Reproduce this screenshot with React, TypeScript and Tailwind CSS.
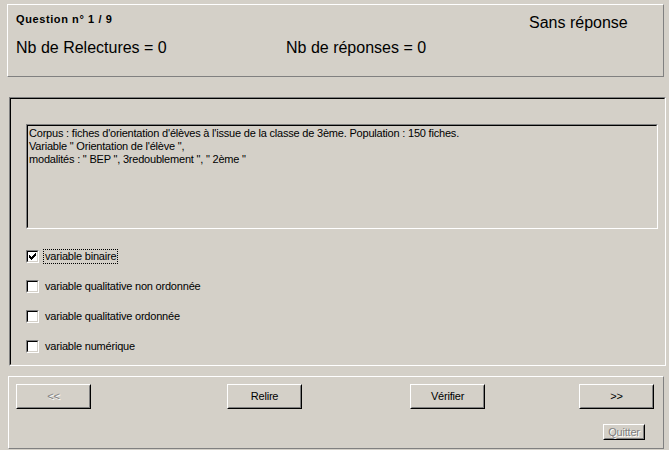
import React from "react";

const font = { fontFamily: '"Liberation Sans", Arial, sans-serif' };

const options = [
  { label: "variable binaire", checked: true },
  { label: "variable qualitative non ordonnée", checked: false },
  { label: "variable qualitative ordonnée", checked: false },
  { label: "variable numérique", checked: false },
];

const checkPixels = [
  [6, 0],
  [5, 1], [6, 1],
  [0, 2], [4, 2], [5, 2], [6, 2],
  [0, 3], [1, 3], [3, 3], [4, 3], [5, 3],
  [0, 4], [1, 4], [2, 4], [3, 4], [4, 4],
  [1, 5], [2, 5], [3, 5],
  [2, 6],
];

function CheckBox({ checked }: { checked: boolean }) {
  return (
    <div className="h-[13px] w-[13px] shrink-0 border border-t-[#808080] border-l-[#808080] border-b-white border-r-white">
      <div className="flex h-full w-full items-center justify-center border border-t-black border-l-black border-b-[#d4d0c8] border-r-[#d4d0c8] bg-white">
        {checked && (
          <svg width="7" height="7" viewBox="0 0 7 7" shapeRendering="crispEdges">
            {checkPixels.map(([x, y]) => (
              <rect key={`${x}-${y}`} x={x} y={y} width="1" height="1" fill="#000" />
            ))}
          </svg>
        )}
      </div>
    </div>
  );
}

function Button({
  label,
  disabled,
  className,
}: {
  label: string;
  disabled?: boolean;
  className: string;
}) {
  return (
    <div
      className={`shrink-0 border border-t-white border-l-white border-b-black border-r-black ${className}`}
    >
      <div className="flex h-full w-full items-center justify-center border border-t-[#d4d0c8] border-l-[#d4d0c8] border-b-[#808080] border-r-[#808080] text-[11px] leading-[13px] tracking-[-0.2px]">
        <span
          className={
            disabled ? "text-[#808080] [text-shadow:1px_1px_0_#ffffff]" : "text-black"
          }
        >
          {label}
        </span>
      </div>
    </div>
  );
}

export default function App() {
  return (
    <div className="h-[450px] w-[669px] overflow-hidden bg-[#d4d0c8] text-black" style={font}>
      {/* en-tête */}
      <div className="ml-[7px] mt-[4px] h-[73px] w-[657px] border border-t-white border-l-white border-b-[#808080] border-r-[#808080] pl-[8px] pt-[8px]">
        <div className="grid grid-cols-[270px_243px_1fr] items-start">
          <div className="text-[11px] font-bold leading-[13px] tracking-[0.6px]">Question n° 1 / 9</div>
          <div />
          <div className="text-[16px] leading-[20px]">Sans réponse</div>
        </div>
        <div className="mt-[5px] grid grid-cols-[270px_243px_1fr] text-[16px] leading-[20px]">
          <div>Nb de Relectures = 0</div>
          <div>Nb de réponses = 0</div>
          <div />
        </div>
      </div>

      {/* question */}
      <div className="ml-[9px] mt-[20px] h-[269px] w-[657px] border border-t-[#808080] border-l-[#808080] border-b-white border-r-white">
        <div className="h-full w-full border border-t-black border-l-black border-b-[#d4d0c8] border-r-[#d4d0c8] pl-[15px] pt-[25px]">
          <div className="h-[105px] w-[632px] border border-t-[#808080] border-l-[#808080] border-b-white border-r-white">
            <div className="h-full w-full border border-t-black border-l-black border-b-[#d4d0c8] border-r-[#d4d0c8] pl-[1px] pt-[1px] text-[11px] leading-[13px] tracking-[-0.2px]">
              <div>
                Corpus : fiches d'orientation d'élèves à l'issue de la classe de 3ème. Population : 150 fiches.
              </div>
              <div>Variable " Orientation de l'élève ",</div>
              <div>modalités : " BEP ", 3redoublement ", " 2ème "</div>
            </div>
          </div>

          <div className="mt-[19px] flex flex-col gap-[14px]">
            {options.map((o, i) => (
              <div key={o.label} className="flex h-[16px] items-center">
                <CheckBox checked={o.checked} />
                <span
                  className={`ml-[4px] border px-[1px] text-[11px] leading-[13px] tracking-[-0.2px] ${
                    i === 0 ? "border-dotted border-black" : "border-transparent"
                  }`}
                >
                  {o.label}
                </span>
              </div>
            ))}
          </div>
        </div>
      </div>

      {/* boutons */}
      <div className="ml-[8px] mt-[10px] h-[73px] w-[656px] border border-t-white border-l-white border-b-[#808080] border-r-[#808080] pl-[7px] pt-[7px]">
        <div className="flex">
          <Button label="<<" disabled className="h-[25px] w-[75px]" />
          <Button label="Relire" className="ml-[136px] h-[25px] w-[75px]" />
          <Button label="Vérifier" className="ml-[108px] h-[25px] w-[75px]" />
          <Button label=">>" className="ml-[94px] h-[25px] w-[75px]" />
        </div>
        <div className="mt-[15px] flex">
          <Button label="Quitter" disabled className="ml-[587px] h-[16px] w-[42px]" />
        </div>
      </div>
    </div>
  );
}
